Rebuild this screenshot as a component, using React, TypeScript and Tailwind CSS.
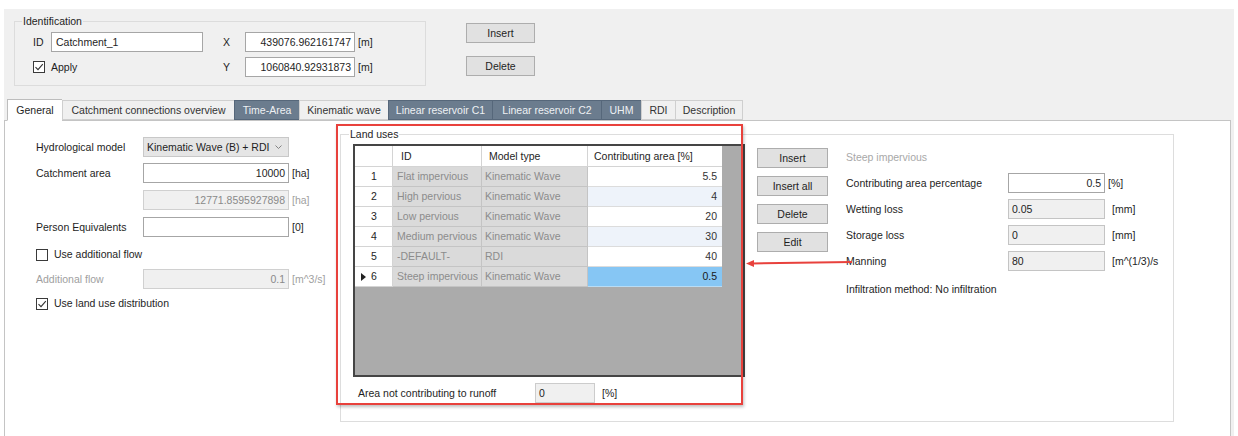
import React from "react";

type Row = { n: number; id: string; model: string; area: string };

const rows: Row[] = [
  { n: 1, id: "Flat impervious", model: "Kinematic Wave", area: "5.5" },
  { n: 2, id: "High pervious", model: "Kinematic Wave", area: "4" },
  { n: 3, id: "Low pervious", model: "Kinematic Wave", area: "20" },
  { n: 4, id: "Medium pervious", model: "Kinematic Wave", area: "30" },
  { n: 5, id: "-DEFAULT-", model: "RDI", area: "40" },
  { n: 6, id: "Steep impervious", model: "Kinematic Wave", area: "0.5" },
];

const tabs = [
  { label: "General", cls: "w-[55px] h-[22px] bg-white border-[#bdbdbd] border-b-white -mb-px z-10 text-[#1e1e1e]" },
  { label: "Catchment connections overview", cls: "w-[172px] h-[20px] bg-[#f0f0f0] border-[#cfcfcf] text-[#333]" },
  { label: "Time-Area", cls: "w-[65px] h-[20px] bg-[#6b7c8e] border-[#56677a] text-[#eef1f4]" },
  { label: "Kinematic wave", cls: "w-[89px] h-[20px] bg-[#f0f0f0] border-[#cfcfcf] text-[#333]" },
  { label: "Linear reservoir C1", cls: "w-[104px] h-[20px] bg-[#6b7c8e] border-[#56677a] text-[#eef1f4]" },
  { label: "Linear reservoir C2", cls: "w-[109px] h-[20px] bg-[#6b7c8e] border-[#56677a] text-[#eef1f4]" },
  { label: "UHM", cls: "w-[40px] h-[20px] bg-[#6b7c8e] border-[#56677a] text-[#eef1f4]" },
  { label: "RDI", cls: "w-[34px] h-[20px] bg-[#f0f0f0] border-[#cfcfcf] text-[#333]" },
  { label: "Description", cls: "w-[68px] h-[20px] bg-[#f0f0f0] border-[#cfcfcf] text-[#333]" },
];

function Check({ checked }: { checked?: boolean }) {
  return (
    <span className="flex h-[12px] w-[12px] shrink-0 items-center justify-center border border-[#3a3a3a] bg-white">
      {checked && (
        <svg width="10" height="10" viewBox="0 0 10 10">
          <path d="M1.5 5.2 L4 7.7 L8.8 2.2" fill="none" stroke="#333" strokeWidth="1.1" />
        </svg>
      )}
    </span>
  );
}

function Btn({ label, w }: { label: string; w: string }) {
  return (
    <div className={`${w} flex h-[20px] items-center justify-center border border-[#adadad] bg-[#e1e1e1] text-[#1e1e1e]`}>
      {label}
    </div>
  );
}

export default function App() {
  return (
    <div className="relative h-[436px] w-[1238px] overflow-hidden whitespace-nowrap bg-white font-['Liberation_Sans',Arial,sans-serif] text-[10.5px] leading-[13px] text-[#1e1e1e]">
      <div className="mx-[4px] mt-[9px] flex h-[427px] flex-col bg-[#f0f0f0]">
        {/* identification */}
        <div className="flex h-[90px] shrink-0 pl-[10px]">
          <fieldset className="mt-[6px] h-[71px] w-[412px] border border-[#dcdcdc]">
            <legend className="ml-[7px] px-[1px]">Identification</legend>
            <div className="mt-[4px] flex flex-col gap-[5px] pl-[18px]">
              <div className="flex h-[20px] items-center">
                <div className="flex w-[190px] items-center">
                  <span className="w-[18px]">ID</span>
                  <div className="flex h-[20px] w-[152px] items-center border border-[#a6a6a6] bg-white px-[4px]">Catchment_1</div>
                </div>
                <span className="w-[22px]">X</span>
                <div className="flex h-[20px] w-[110px] items-center justify-end border border-[#a6a6a6] bg-white px-[3px]">439076.962161747</div>
                <span className="ml-[3px]">[m]</span>
              </div>
              <div className="flex h-[20px] items-center">
                <div className="flex w-[190px] items-center gap-[6px]">
                  <Check checked />
                  <span>Apply</span>
                </div>
                <span className="w-[22px]">Y</span>
                <div className="flex h-[20px] w-[110px] items-center justify-end border border-[#a6a6a6] bg-white px-[3px]">1060840.92931873</div>
                <span className="ml-[3px]">[m]</span>
              </div>
            </div>
          </fieldset>
          <div className="ml-[40px] mt-[14px] flex flex-col gap-[13px]">
            <Btn label="Insert" w="w-[69px]" />
            <Btn label="Delete" w="w-[69px]" />
          </div>
        </div>

        {/* tabs */}
        <div className="flex h-[21px] shrink-0 items-end pl-[3px]">
          {tabs.map((t) => (
            <div key={t.label} className={`${t.cls} flex items-center justify-center border border-r-0 last:border-r`}>
              {t.label}
            </div>
          ))}
        </div>

        {/* panel */}
        <div className="mr-[3px] flex h-[330px] shrink-0 border border-[#c4c4c4] bg-white">
          {/* left column */}
          <div className="flex w-[335px] shrink-0 flex-col pl-[31px] pt-[16px]">
            <div className="flex h-[20px] items-center">
              <span className="w-[107px]">Hydrological model</span>
              <div className="flex h-[20px] w-[146px] items-center justify-between border border-[#c8c8c8] bg-[#e5e5e5] pl-[3px] pr-[6px]">
                <span>Kinematic Wave (B) + RDI</span>
                <svg width="7" height="4" viewBox="0 0 7 4">
                  <path d="M0.5 0.5 L3.5 3.5 L6.5 0.5" fill="none" stroke="#777" strokeWidth="0.9" />
                </svg>
              </div>
            </div>
            <div className="mt-[6px] flex h-[20px] items-center">
              <span className="w-[107px]">Catchment area</span>
              <div className="flex h-[20px] w-[146px] items-center justify-end border border-[#a6a6a6] bg-white px-[3px]">10000</div>
              <span className="ml-[3px]">[ha]</span>
            </div>
            <div className="mt-[7px] flex h-[20px] items-center">
              <span className="w-[107px]" />
              <div className="flex h-[20px] w-[146px] items-center justify-end border border-[#d0d0d0] bg-[#f0f0f0] px-[3px] text-[#8a8a8a]">12771.8595927898</div>
              <span className="ml-[3px] text-[#a0a0a0]">[ha]</span>
            </div>
            <div className="mt-[7px] flex h-[20px] items-center">
              <span className="w-[107px]">Person Equivalents</span>
              <div className="h-[20px] w-[146px] border border-[#a6a6a6] bg-white" />
              <span className="ml-[3px]">[0]</span>
            </div>
            <div className="mt-[11px] flex h-[13px] items-center gap-[6px]">
              <Check />
              <span>Use additional flow</span>
            </div>
            <div className="mt-[8px] flex h-[20px] items-center">
              <span className="w-[107px] text-[#a0a0a0]">Additional flow</span>
              <div className="flex h-[20px] w-[146px] items-center justify-end border border-[#d0d0d0] bg-[#f0f0f0] px-[3px] text-[#8a8a8a]">0.1</div>
              <span className="ml-[3px] text-[#a0a0a0]">[m^3/s]</span>
            </div>
            <div className="mt-[8px] flex h-[13px] items-center gap-[6px]">
              <Check checked />
              <span>Use land use distribution</span>
            </div>
          </div>

          {/* land uses */}
          <fieldset className="mt-[7px] h-[294px] w-[834px] shrink-0 border border-[#dddddd]">
            <legend className="ml-[8px] px-[1px]">Land uses</legend>
            <div className="mt-[3px] flex pl-[12px]">
              <div className="flex flex-col">
                <div className="h-[233px] w-[392px] border-2 border-[#454545] bg-[#ababab]">
                  <div className="flex h-[21px] w-[367px] bg-white">
                    <div className="w-[38px] border-b border-r border-[#d4d4d4]" />
                    <div className="flex w-[89px] items-center border-b border-r border-[#d4d4d4] pl-[8px]">ID</div>
                    <div className="flex w-[106px] items-center border-b border-r border-[#d4d4d4] pl-[7px]">Model type</div>
                    <div className="flex w-[134px] items-center border-b border-[#d4d4d4] pl-[6px]">Contributing area [%]</div>
                  </div>
                  {rows.map((r) => (
                    <div key={r.n} className="flex h-[20px] w-[367px]">
                      <div className="relative flex w-[38px] items-center justify-center border-b border-r border-[#d4d4d4] bg-white pl-[1px]">
                        {r.n === 6 && (
                          <svg className="absolute left-[6px] top-[6px]" width="5" height="8" viewBox="0 0 5 8">
                            <path d="M0 0 L5 4 L0 8 Z" fill="#222" />
                          </svg>
                        )}
                        {r.n}
                      </div>
                      <div className="flex w-[89px] items-center overflow-hidden border-b border-r border-[#c4c4c4] bg-[#dadada] pl-[4px] text-[#8c8c8c]">{r.id}</div>
                      <div className="flex w-[106px] items-center border-b border-r border-[#c4c4c4] bg-[#dadada] pl-[3px] text-[#8c8c8c]">{r.model}</div>
                      <div
                        className={`flex w-[134px] items-center justify-end border-b pr-[5px] ${
                          r.n === 6
                            ? "border-[#b8dcf5] bg-[#86c6f4] text-[#1a1a1a]"
                            : r.n % 2 === 0
                              ? "border-[#dcdcdc] bg-[#eef3fa] text-[#333]"
                              : "border-[#dcdcdc] bg-white text-[#333]"
                        }`}
                      >
                        {r.area}
                      </div>
                    </div>
                  ))}
                </div>
                <div className="mt-[6px] flex h-[20px] items-center pl-[5px]">
                  <span className="w-[177px]">Area not contributing to runoff</span>
                  <div className="flex h-[20px] w-[60px] items-center border border-[#cccccc] bg-[#f0f0f0] px-[3px]">0</div>
                  <span className="ml-[7px]">[%]</span>
                </div>
              </div>

              <div className="ml-[12px] mt-[4px] flex flex-col gap-[8px]">
                <Btn label="Insert" w="w-[71px]" />
                <Btn label="Insert all" w="w-[71px]" />
                <Btn label="Delete" w="w-[71px]" />
                <Btn label="Edit" w="w-[71px]" />
              </div>

              <div className="ml-[18px] mt-[7px] flex flex-col">
                <span className="text-[#a8a8a8]">Steep impervious</span>
                <div className="mt-[9px] flex flex-col gap-[6px]">
                  <div className="flex h-[20px] items-center">
                    <span className="w-[162px]">Contributing area percentage</span>
                    <div className="flex h-[20px] w-[97px] items-center justify-end border border-[#a6a6a6] bg-white px-[3px]">0.5</div>
                    <span className="ml-[3px]">[%]</span>
                  </div>
                  <div className="flex h-[20px] items-center">
                    <span className="w-[162px]">Wetting loss</span>
                    <div className="flex h-[20px] w-[97px] items-center border border-[#c4c4c4] bg-[#f0f0f0] px-[3px]">0.05</div>
                    <span className="ml-[7px]">[mm]</span>
                  </div>
                  <div className="flex h-[20px] items-center">
                    <span className="w-[162px]">Storage loss</span>
                    <div className="flex h-[20px] w-[97px] items-center border border-[#c4c4c4] bg-[#f0f0f0] px-[3px]">0</div>
                    <span className="ml-[7px]">[mm]</span>
                  </div>
                  <div className="flex h-[20px] items-center">
                    <span className="w-[162px]">Manning</span>
                    <div className="flex h-[20px] w-[97px] items-center border border-[#c4c4c4] bg-[#f0f0f0] px-[3px]">80</div>
                    <span className="ml-[7px]">[m^(1/3)/s</span>
                  </div>
                </div>
                <span className="mt-[12px]">Infiltration method: No infiltration</span>
              </div>
            </div>
          </fieldset>
        </div>
      </div>

      {/* annotation overlay */}
      <div className="pointer-events-none absolute left-[336px] top-[124px] h-[281px] w-[407px] border-2 border-[#e8413c] shadow-[1px_2px_3px_rgba(0,0,0,0.25)]" />
      <svg className="pointer-events-none absolute left-[744px] top-[256px]" width="112" height="14" viewBox="0 0 112 14">
        <path d="M108 6 L8 7.5" stroke="#e8413c" strokeWidth="2" />
        <path d="M2 7.6 L10 4 L10 11 Z" fill="#e8413c" />
      </svg>
    </div>
  );
}
